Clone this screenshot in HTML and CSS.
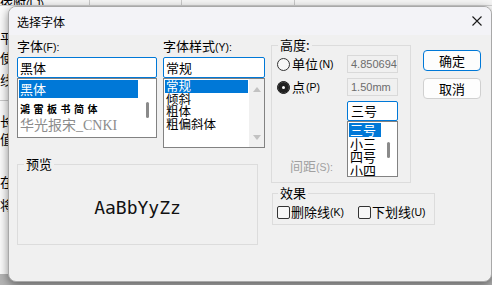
FILE: index.html
```html
<!DOCTYPE html>
<html lang="zh-CN">
<head>
<meta charset="UTF-8">
<title>选择字体</title>
<link rel="stylesheet" href="styles.css">
</head>
<body>
<div class="desk">
    <div class="app-top">
        <div class="cell cell-a"><span>依附<small>(I,J)</small></span></div>
        <div class="cell cell-b">
            <svg width="92" height="6" viewBox="0 0 92 6"><path d="M3 5.5H48" stroke="#000" stroke-width="1"/><path d="M23 0H30L48 5H23Z" fill="#000"/></svg>
        </div>
        <div class="cell cell-c"></div>
        <div class="cell cell-d"></div>
    </div>
    <div class="app-side">
        <span class="ch c1">平</span>
        <span class="ch c2">使</span>
        <span class="ch c3">线</span>
        <span class="rule"></span>
        <span class="ch c4">长</span>
        <span class="ch c5">值</span>
        <span class="ch c6">在</span>
        <span class="ch c7">将</span>
    </div>
    <div class="app-bottom"></div>

    <div class="dialog">
        <div class="titlebar">
            <span class="title">选择字体</span>
            <svg class="close" width="10" height="10" viewBox="0 0 10 10"><path d="M0.5 0.5L9.5 9.5M9.5 0.5L0.5 9.5" stroke="#1a1a1a" stroke-width="1.1"/></svg>
        </div>

        <div class="body">
            <div class="left">
                <div class="pickers">
                    <div class="col col-font">
                        <div class="lbl">字体<small>(F):</small></div>
                        <div class="input focus">黑体</div>
                        <div class="list list-font">
                            <div class="items">
                                <div class="item sel">黑体</div>
                                <div class="item brush">鴻雷板书简体</div>
                                <div class="item song">华光报宋_CNKI</div>
                            </div>
                            <div class="thin-scroll"><span class="thumb t-font"></span></div>
                        </div>
                    </div>
                    <div class="col col-style">
                        <div class="lbl">字体样式<small>(Y):</small></div>
                        <div class="input focus">常规</div>
                        <div class="list list-style">
                            <div class="items">
                                <div class="item sel">常规</div>
                                <div class="item">倾斜</div>
                                <div class="item">粗体</div>
                                <div class="item">粗偏斜体</div>
                            </div>
                            <div class="classic-scroll">
                                <span class="arrow up"></span>
                                <span class="arrow down"></span>
                            </div>
                        </div>
                    </div>
                </div>

                <fieldset class="group preview">
                    <legend>预览</legend>
                    <div class="sample">AaBbYyZz</div>
                </fieldset>
            </div>

            <div class="right">
                <fieldset class="group height">
                    <legend>高度:</legend>
                    <div class="hgrid">
                        <label class="radio"><span class="dot"></span>单位<small>(N)</small></label>
                        <div class="input off">4.850694</div>
                        <label class="radio"><span class="dot on"></span>点<small>(P)</small></label>
                        <div class="input off">1.50mm</div>
                        <div class="spacing">间距<small>(S):</small></div>
                        <div class="combo">
                            <div class="input focus">三号</div>
                            <div class="list list-size">
                                <div class="items">
                                    <div class="item sel">三号</div>
                                    <div class="item">小三</div>
                                    <div class="item">四号</div>
                                    <div class="item">小四</div>
                                </div>
                                <div class="thin-scroll"><span class="thumb t-size"></span></div>
                            </div>
                        </div>
                    </div>
                </fieldset>

                <div class="buttons">
                    <button class="btn default">确定</button>
                    <button class="btn">取消</button>
                </div>

                <fieldset class="group effects">
                    <legend>效果</legend>
                    <div class="checks">
                        <label class="check"><span class="box"></span>删除线<small>(K)</small></label>
                        <label class="check"><span class="box"></span>下划线<small>(U)</small></label>
                    </div>
                </fieldset>
            </div>
        </div>
    </div>
</div>
</body>
</html>
```

FILE: styles.css
```css
/* Font picker dialog */
* {
    margin: 0;
    padding: 0;
    box-sizing: border-box;
}

body {
    width: 492px;
    height: 285px;
    overflow: hidden;
    background: #fff;
    color: #000;
    font-family: "Noto Sans CJK SC", sans-serif;
    font-size: 13px;
}

small {
    font-family: "Liberation Sans", sans-serif;
    font-size: 10.5px;
}

.desk {
    position: relative;
    display: flex;
    flex-direction: column;
    width: 492px;
    height: 285px;
    background: #fafafa;
    overflow: hidden;
}

/* app behind the dialog */
.app-top {
    display: flex;
    flex: none;
    height: 6px;
    background: #f4f4f4;
    border-bottom: 1px solid #cfcfcf;
    overflow: hidden;
}

.cell {
    border-right: 1px solid #c8c8c8;
    line-height: 14px;
    font-size: 13px;
}

.cell span {
    display: block;
    margin-top: -4px;
    white-space: nowrap;
}

.cell-a { width: 90px; }
.cell-b { width: 92px; }
.cell-c { width: 113px; }
.cell-d { flex: 1; border-right: none; }

.app-side {
    display: flex;
    flex-direction: column;
    flex: none;
    width: 8px;
    height: 268px;
    background: #fafafa;
}

.app-bottom {
    flex: 1;
    background: #b4b4b4;
}

.ch {
    display: block;
    height: 18px;
    line-height: 18px;
    font-size: 13px;
    width: 14px;
}

.c1 { margin-top: 23px; }
.c2 { margin-top: 2px; }
.c3 { margin-top: 4px; }
.c4 { margin-top: 11px; }
.c5 { margin-top: 0; }
.c6 { margin-top: 25px; }
.c7 { margin-top: 5px; }

.rule {
    display: block;
    width: 8px;
    margin-top: 11px;
    border-top: 1px solid #c8c8c8;
}

/* dialog window */
.dialog {
    position: absolute;
    left: 8px;
    top: 6px;
    width: 484px;
    height: 276px;
    background: #f0f0f0;
    border: 1px solid #a8a8a8;
    border-radius: 8px;
    box-shadow: 0 3px 10px rgba(0, 0, 0, 0.45);
    overflow: hidden;
}

.titlebar {
    display: flex;
    align-items: center;
    justify-content: space-between;
    height: 28px;
    padding: 0 9px 0 8px;
    background: #f3f3f7;
}

.title {
    font-size: 12px;
    line-height: 16px;
    margin-top: 1px;
}

.close {
    display: block;
}

.body {
    display: flex;
    gap: 6px;
    padding: 3px 0 0 8px;
}

.left {
    width: 248px;
}

.pickers {
    display: flex;
    gap: 6px;
    align-items: flex-start;
}

.col-font { width: 140px; }
.col-style { width: 102px; }

.lbl {
    line-height: 16px;
    height: 16px;
    margin-bottom: 3px;
}

.input {
    height: 21px;
    line-height: 19px;
    padding-left: 2px;
    background: #fff;
    border: 1px solid #7a7a7a;
    border-radius: 2px;
    white-space: nowrap;
    overflow: hidden;
}

.input.focus {
    border-color: #0078d7;
}

.input.off {
    height: 18px;
    line-height: 16px;
    padding-left: 3px;
    background: #f0f0f0;
    border-color: #d9d9d9;
    color: #6d6d6d;
    font-family: "Liberation Sans", sans-serif;
    font-size: 11px;
    border-radius: 0;
}

.list {
    display: flex;
    background: #fff;
    border: 1px solid #828282;
    overflow: hidden;
}

.items {
    flex: 1;
    padding: 1px;
    overflow: hidden;
}

.item {
    white-space: nowrap;
}

.item.sel {
    background: #0078d7;
    color: #fff;
}

.list-font { height: 60px; }
.list-font .item {
    height: 19px;
    line-height: 18px;
    padding-left: 1px;
}
.list-font .item.sel { height: 18px; }

.list-font .brush {
    font-size: 10px;
    font-weight: bold;
    letter-spacing: 3.5px;
    line-height: 21px;
}

.list-font .song {
    font-family: "Liberation Serif", "Noto Sans CJK SC", serif;
    font-size: 14px;
    color: #8c8c8c;
}

.thin-scroll {
    position: relative;
    width: 17px;
}

.thumb {
    position: absolute;
    left: 7px;
    width: 3px;
    border-radius: 2px;
    background: #8a8a8a;
}

.t-font { top: 23px; height: 16px; }

.list-style { height: 70px; }
.list-style .item {
    height: 12.5px;
    line-height: 12.5px;
    font-size: 12.5px;
    padding-left: 1px;
}

.classic-scroll {
    display: flex;
    flex-direction: column;
    justify-content: space-between;
    align-items: center;
    width: 15px;
    padding: 8px 0 7px;
    background: #f0f0f0;
}

.arrow {
    width: 0;
    height: 0;
    border-left: 4px solid transparent;
    border-right: 4px solid transparent;
}

.arrow.up { border-bottom: 5px solid #c2c2c2; }
.arrow.down { border-top: 5px solid #c2c2c2; }

/* group boxes */
.group {
    border: 1px solid #dcdcdc;
    padding: 0;
    margin: 0;
    min-width: 0;
}

.group legend {
    padding: 0 2px;
    line-height: 14px;
    font-size: 13px;
}

.preview {
    width: 241px;
    height: 88px;
    margin-top: 9px;
}

.preview legend { margin-left: 6px; }

.sample {
    padding-top: 27px;
    text-align: center;
    font-family: "DejaVu Sans Mono", monospace;
    font-size: 18px;
    line-height: 20px;
    color: #111;
}

.right {
    display: grid;
    grid-template-columns: 140px 58px;
    column-gap: 12px;
    align-content: start;
}

.height {
    width: 140px;
}

.height legend { margin-left: 6px; }

.hgrid {
    display: grid;
    grid-template-columns: 70px 51px;
    row-gap: 5px;
    padding: 3px 12px 5px 5px;
}

.radio {
    display: flex;
    align-items: center;
    gap: 1px;
    line-height: 16px;
}

.dot {
    width: 13px;
    height: 13px;
    border: 1px solid #333;
    border-radius: 50%;
    background: #f7f7f7;
    margin-right: 1px;
}

.dot.on {
    background: #1f1f1f;
    border-color: #1f1f1f;
    box-shadow: inset 0 0 0 4px #1f1f1f, inset 0 0 0 7px #fff;
}

.spacing {
    align-self: end;
    padding-left: 13px;
    margin-bottom: 2px;
    line-height: 16px;
    color: #a0a0a0;
}

.combo .input {
    height: 20px;
    line-height: 18px;
    padding-left: 3px;
}

.list-size {
    height: 56px;
}

.list-size .items {
    flex: none;
    width: 34px;
}

.list-size .item {
    height: 13.5px;
    line-height: 13.5px;
    padding-left: 1px;
}

.list-size .thin-scroll {
    flex: 1;
}

.t-size { top: 20px; height: 16px; left: 5px; }

.buttons {
    display: flex;
    flex-direction: column;
    gap: 7px;
    margin-top: 12px;
}

.btn {
    height: 21px;
    background: #fdfdfd;
    border: 1px solid #d0d0d0;
    border-radius: 4px;
    font-family: "Noto Sans CJK SC", sans-serif;
    font-size: 13px;
    line-height: 18px;
    color: #000;
}

.btn.default {
    border-color: #0078d7;
}

.effects {
    grid-column: 1 / -1;
    width: 163px;
    margin: 3px 0 0 1px;
}

.effects legend { margin-left: 5px; }

.checks {
    display: flex;
    gap: 14px;
    padding: 4px 0 4px 4px;
}

.check {
    display: flex;
    align-items: center;
    line-height: 16px;
    white-space: nowrap;
}

.box {
    width: 13px;
    height: 13px;
    border: 1px solid #333;
    border-radius: 2px;
    background: #f7f7f7;
    margin-right: 1px;
}
```
